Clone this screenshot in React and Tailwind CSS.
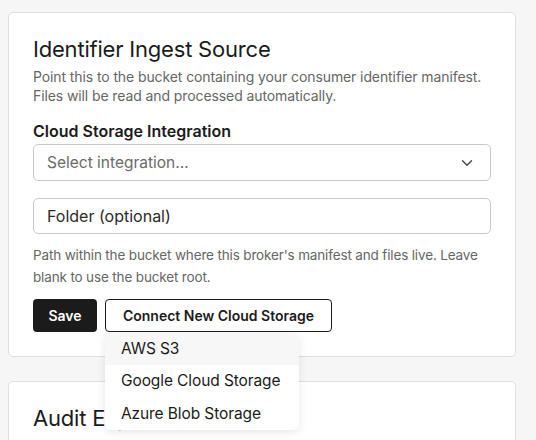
import React from "react";

function Chevron() {
  return (
    <svg width="12" height="8" viewBox="0 0 12 8" fill="none" className="shrink-0">
      <path d="M1.5 1.75 L6 6.25 L10.5 1.75" stroke="#444" strokeWidth="1.4" strokeLinecap="round" strokeLinejoin="round" />
    </svg>
  );
}

export default function App() {
  return (
    <div
      className="min-h-[440px] h-[440px] overflow-hidden bg-[#f5f6f5] px-2 pt-3 text-[#1b1b1b]"
      style={{ fontFamily: "Inter, 'Noto Sans', sans-serif" }}
    >
      <div className="w-[508px] flex flex-col gap-[24px]">
        <div className="rounded-[5px] border border-[#dedfde] bg-white px-[24px] pt-[20px] pb-[24px]">
          <h2 className="text-[22px] leading-[32px] font-normal tracking-[-0.2px] text-[#1b1b1b]">Identifier Ingest Source</h2>
          <p className="mt-[3px] text-[14px] leading-[18.5px] tracking-[-0.1px] text-[#666]">
            Point this to the bucket containing your consumer identifier manifest. Files will be read and processed automatically.
          </p>
          <div className="mt-[14px] text-[16px] leading-[24px] font-semibold text-[#1b1b1b]">Cloud Storage Integration</div>
          <div className="mt-[1px] flex h-[37px] items-center justify-between rounded-[5px] border border-[#c9c9c9] pl-[13px] pr-[17px] text-[15.5px] text-[#6a6a6a]">
            <span>Select integration...</span>
            <Chevron />
          </div>
          <div className="mt-[17px] flex h-[36px] items-center rounded-[5px] border border-[#c9c9c9] pl-[13px] text-[16px] text-[#2a2a2a]">
            Folder (optional)
          </div>
          <p className="mt-[10px] text-[13.5px] leading-[22px] tracking-[-0.15px] text-[#666]">
            Path within the bucket where this broker's manifest and files live. Leave blank to use the bucket root.
          </p>
          <div className="mt-[11px] flex gap-[8px]">
            <button className="h-[33px] w-[64px] rounded-[4px] bg-[#1b1b1b] text-[14px] font-semibold text-white">Save</button>
            <div className="relative">
              <button className="h-[33px] w-[227px] rounded-[4px] border border-[#1b1b1b] bg-white text-[14px] font-semibold text-[#1b1b1b]">
                Connect New Cloud Storage
              </button>
              <div className="absolute left-0 top-[34px] z-10 w-[194px] overflow-hidden rounded-[6px] bg-white shadow-[0_2px_10px_rgba(0,0,0,0.10)]">
                <div className="flex h-[32px] items-center bg-[#f6f7f6] pl-[16px] text-[15.5px] tracking-[-0.1px] text-[#1b1b1b]">AWS S3</div>
                <div className="flex h-[32px] items-center pl-[16px] text-[15.5px] tracking-[-0.1px] text-[#1b1b1b]">Google Cloud Storage</div>
                <div className="flex h-[33px] items-center pl-[16px] text-[15.5px] tracking-[-0.1px] text-[#1b1b1b]">Azure Blob Storage</div>
              </div>
            </div>
          </div>
        </div>
        <div className="rounded-[5px] border border-[#dedfde] bg-white px-[24px] pt-[20px] pb-[24px]">
          <h2 className="text-[22px] leading-[32px] font-normal tracking-[-0.2px] text-[#1b1b1b]">Audit Export Destination</h2>
          <p className="mt-[3px] text-[14px] leading-[18.5px] tracking-[-0.1px] text-[#666]">
            Point this to the bucket where audit exports should be written.
          </p>
        </div>
      </div>
    </div>
  );
}
